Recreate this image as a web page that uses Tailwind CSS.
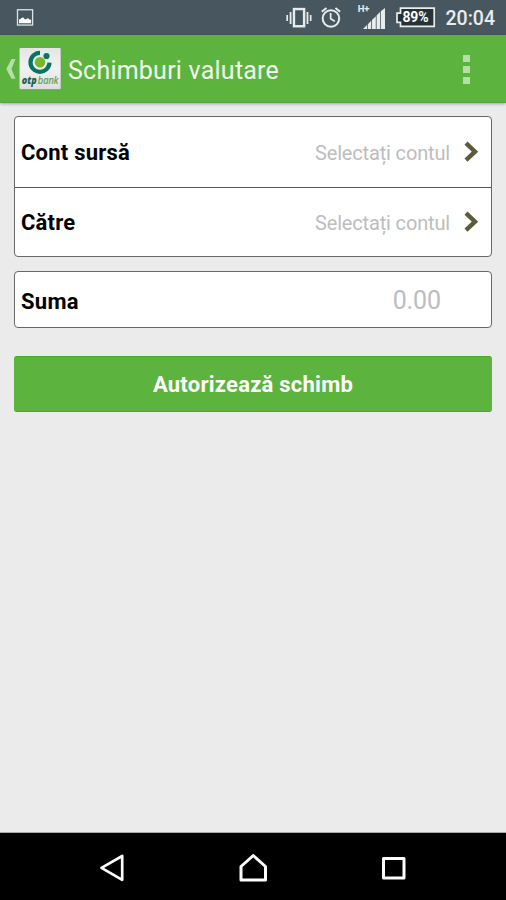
<!DOCTYPE html>
<html lang="ro">
<head>
<meta charset="utf-8">
<title>Schimburi valutare</title>
<script src="https://cdn.jsdelivr.net/npm/@tailwindcss/browser@4"></script>
</head>
<body class="w-[506px] h-[900px] flex flex-col overflow-hidden bg-[#ebebeb] font-[Roboto,sans-serif]">
<div class="h-[35px] shrink-0 bg-[#48575f] flex items-start pl-[16px] pr-[11px] text-[#e9eced]">
  <svg class="mt-[8px]" width="18" height="18" viewBox="0 0 18 18"><rect x="1.5" y="1.7" width="15.2" height="15.4" fill="none" stroke="#dfe3e5" stroke-width="1.3"/><path d="M3 15.3v-3.6l2-1.2 2-1.2 2 2.2 1.6-.4 1.4-1 1.4 1.5 1.8.2v3.5z" fill="#fff"/></svg>
  <svg class="ml-[252px] mt-[7px]" width="26" height="22" viewBox="0 0 26 22" fill="none" stroke="#e9eced"><rect x="8" y="2" width="10.2" height="17.3" stroke-width="2.4"/><path d="M4.6 5v12M21.6 5v12" stroke-width="1.8"/><path d="M1.2 8v6M24.8 8v6" stroke-width="1.7"/></svg>
  <svg class="ml-[9px] mt-[6px]" width="20" height="23" viewBox="0 0 20 23" fill="none" stroke="#e9eced" stroke-width="2"><circle cx="10" cy="12.5" r="8.3"/><path d="M9.7 7v5.8l4.2 2.5" stroke-width="1.7"/><path d="M.8 5.7 5.5 2M19.2 5.7 14.5 2"/></svg>
  <div class="relative ml-[21px] w-[23px] h-[35px]">
    <span class="absolute left-[-4px] top-[4px] text-[9.5px] leading-[10px] font-bold">H+</span>
    <svg class="absolute left-0 top-[8px]" width="23" height="22" viewBox="0 0 23 22" fill="#e9eced"><path d="M1 21l4-4V21zM5.8 21v-4.8L9.2 12.800v8.200zM10 21v-9l3.8-3.8V21zM14.600 21V7.500L18 4.100V21zM18.800 21V3.300L23 0v21z"/></svg>
  </div>
  <div class="relative ml-[11px] mt-[7px] w-[39px] h-[21px]">
    <svg width="40" height="21" viewBox="0 0 40 21"><path d="M4.500 1.200h33.700v18.100H4.500v-4H1V6.200h3.500z" fill="#273237" stroke="#e9eced" stroke-width="1.7"/></svg>
    <span class="absolute left-[7px] top-[2px] text-[14px] leading-[17px] font-bold text-white tracking-[-0.2px]">89%</span>
  </div>
  <span class="ml-[11px] mt-[6px] text-[19.5px] leading-[25px] font-medium whitespace-nowrap">20:04</span>
</div>
<header class="h-[68px] shrink-0 bg-[#5cb33e] border-b border-[#55a43b] shadow-[0_1px_3px_rgba(0,0,0,0.3)] flex items-center pl-[6px] relative">
  <svg width="10" height="22" viewBox="0 0 10 22"><path d="M5.500 1h4L5.500 11l4 9.700h-4L.3 11z" fill="#b7dda9"/></svg>
  <svg class="ml-[3px]" width="43" height="44" viewBox="0 0 43 44">
    <defs><linearGradient id="g" x2="0" y2="1"><stop stop-color="#e4e6e5"/><stop offset=".5" stop-color="#f1f2f1"/><stop offset="1" stop-color="#dddfde"/></linearGradient></defs>
    <rect x=".2" y="1" width="41.800" height="42" rx="1.500" fill="#82a878"/><rect x=".6" y="1" width="41" height="41" rx="1" fill="url(#g)"/>
    <path d="M21 5.800A9.500 9.500 0 1 0 30.500 15.700" fill="none" stroke="#087562" stroke-width="4.200"/>
    <circle cx="21" cy="15.200" r="5.300" fill="#77b82a"/><circle cx="27.500" cy="9" r="3.100" fill="#087562"/>
    <text x="2.800" y="37" font-family="Open Sans" font-size="10.500" font-style="italic" font-weight="800" fill="#17624e" textLength="15" lengthAdjust="spacingAndGlyphs">otp<tspan font-weight="400" fill="#589752"></tspan></text>
    <text x="18.800" y="37" font-family="Open Sans" font-size="10.500" font-style="italic" fill="#589752" stroke="#589752" stroke-width=".2" textLength="20.500" lengthAdjust="spacingAndGlyphs">bank</text>
  </svg>
  <h1 class="ml-[6px] text-[25px] leading-[30px] text-[#f2f9ef] whitespace-nowrap tracking-[0.23px] mt-[4px]">Schimburi valutare</h1>
  <div class="ml-auto mr-[36px] mt-px flex flex-col gap-[4px]">
    <i class="block size-[7px] bg-[#b7dda9]"></i><i class="block size-[7px] bg-[#b7dda9]"></i><i class="block size-[7px] bg-[#b7dda9]"></i>
  </div>
</header>
<main class="flex-1 px-[14px] pt-[13px] border-b border-[#aaa]">
  <section class="h-[141px] bg-white border border-[#686868] rounded-[4px] flex flex-col">
    <div class="h-[71px] border-b border-[#555] flex items-center pl-[6px] pr-[12px]">
      <span class="text-[22px] font-bold text-black tracking-[0.22px]">Cont sursă</span>
      <span class="ml-auto mt-[2px] text-[20px] text-[#bdbdbd] tracking-[-0.16px]">Selectați contul</span>
      <svg class="ml-[13px]" width="16" height="22" viewBox="0 0 16 22"><path d="M3 2.200l9 8.500-9 8.500" fill="none" stroke="#5c5c3d" stroke-width="4.400"/></svg>
    </div>
    <div class="flex-1 flex items-center pl-[6px] pr-[12px]">
      <span class="text-[22px] font-bold text-black tracking-[0.22px]">Către</span>
      <span class="ml-auto mt-[2px] text-[20px] text-[#bdbdbd] tracking-[-0.16px]">Selectați contul</span>
      <svg class="ml-[13px]" width="16" height="22" viewBox="0 0 16 22"><path d="M3 2.200l9 8.500-9 8.500" fill="none" stroke="#5c5c3d" stroke-width="4.400"/></svg>
    </div>
  </section>
  <section class="mt-[14px] h-[57px] bg-white border border-[#686868] rounded-[4px] flex items-center pl-[6px] pr-[50px]">
    <span class="text-[22px] font-bold text-black mt-[3px] tracking-[0.3px]">Suma</span>
    <span class="ml-auto mt-[3px] text-[25px] text-[#bdbdbd] tracking-[-0.1px]">0.00</span>
  </section>
  <button class="mt-[28px] h-[56px] w-full block rounded-[3px] bg-[#5cb33e] border-y border-[#48ac22] text-white text-[22px] font-bold tracking-[0.24px]">Autorizează schimb</button>
</main>
<nav class="h-[67px] shrink-0 bg-black flex items-center justify-between px-[99px] pt-[3px]">
  <svg width="28" height="30" viewBox="0 0 28 30" fill="none" stroke="#fff" stroke-width="2.700" stroke-linejoin="round"><path d="M2.500 14.800 23.200 3v23.800z"/></svg>
  <svg width="30" height="30" viewBox="0 0 30 30" fill="none" stroke="#fff" stroke-width="3" stroke-linejoin="round"><path d="M2 27V13.500L14.300 2.500l12.200 11V27z"/></svg>
  <svg width="26" height="26" viewBox="0 0 26 26" fill="none" stroke="#fff" stroke-width="3" stroke-linejoin="round"><path d="M2.500 3.500h20.500v19.500H2.500z"/></svg>
</nav>
</body>
</html>
